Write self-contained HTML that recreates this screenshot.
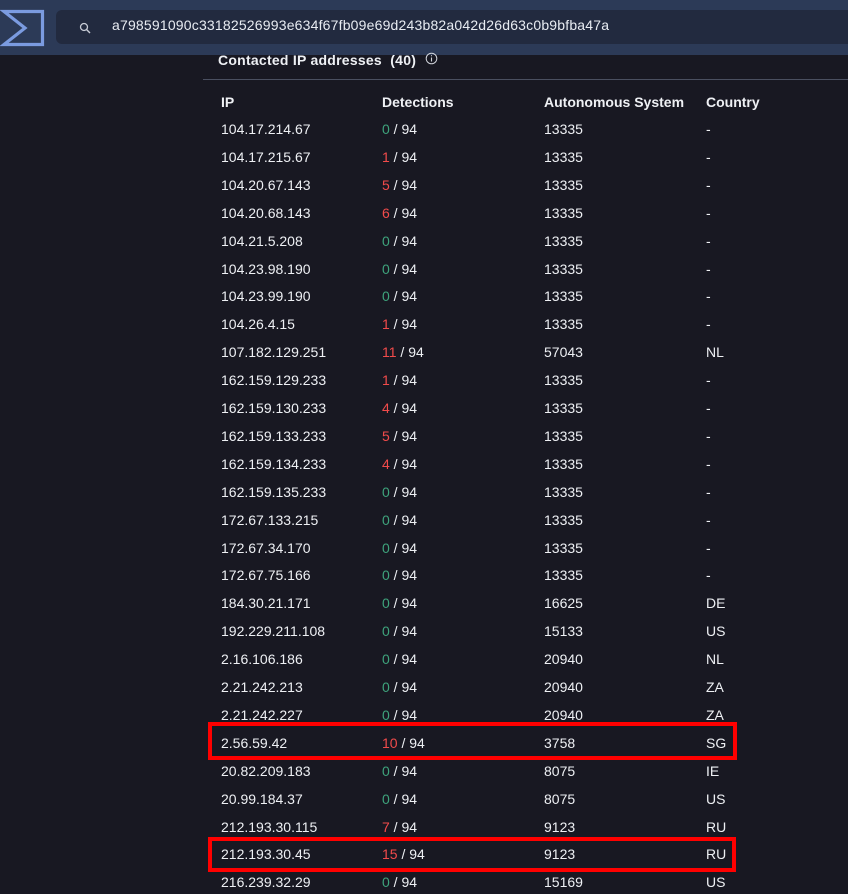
<!DOCTYPE html>
<html><head><meta charset="utf-8"><style>
*{margin:0;padding:0;box-sizing:border-box}
body{width:848px;height:885px;overflow:hidden;background:#181822;font-family:"Liberation Sans","DejaVu Sans",sans-serif;color:#eef0f4;position:relative}
.top{position:absolute;left:0;top:0;width:848px;height:55px;background:#2c3a57}
.search{position:absolute;left:56px;top:10px;width:800px;height:34px;background:#222a3f;border-radius:6px}
.hash{position:absolute;left:112px;top:17px;font-size:14px;color:#e8ecf2;letter-spacing:0.19px}
.title{position:absolute;left:218px;top:52px;font-size:14px;font-weight:bold;letter-spacing:0.25px}
.line{position:absolute;left:203px;top:79px;width:645px;height:1px;background:#4a4f60}
.r{position:absolute;left:0;width:848px;font-size:14px;height:20px}
.r span{position:absolute;top:0}
.h{font-weight:bold}
.g{color:#3ea37c}.red{color:#f24b4b}
.box{position:absolute;border:4px solid #f00}
</style></head><body>
<div class="top"></div>
<div class="search"></div>
<svg style="position:absolute;left:0;top:0" width="50" height="55" viewBox="0 0 50 55"><path d="M4 11.5H42.5V44.5H4L25 28Z" fill="none" stroke="#7b9be0" stroke-width="3.2" stroke-linejoin="miter"/></svg>
<svg style="position:absolute;left:79px;top:22px" width="12" height="12" viewBox="0 0 12 12"><circle cx="5" cy="5" r="3.5" fill="none" stroke="#c8ccd6" stroke-width="1.3"/><path d="M7.5 7.5L11 11" stroke="#c8ccd6" stroke-width="1.4"/></svg>
<div class="hash">a798591090c33182526993e634f67fb09e69d243b82a042d26d63c0b9bfba47a</div>
<div class="title">Contacted IP addresses&nbsp; (40)</div>
<svg style="position:absolute;left:425px;top:52px" width="13" height="13" viewBox="0 0 13 13"><circle cx="6.5" cy="6.5" r="5.3" fill="none" stroke="#d0d3da" stroke-width="1"/><path d="M6.5 5.5V9.5M6.5 3.3V4.3" stroke="#d0d3da" stroke-width="1.1"/></svg>
<div class="line"></div>
<div class="r h" style="top:94px"><span style="left:221px">IP</span><span style="left:382px">Detections</span><span style="left:544px">Autonomous System</span><span style="left:706px">Country</span></div>
<div id="rows"></div>
<div class="box" style="left:208px;top:722px;width:529px;height:38px"></div>
<div class="box" style="left:208px;top:837px;width:528px;height:35px"></div>
<script>
var d=[["104.17.214.67",0,13335,"-"],["104.17.215.67",1,13335,"-"],["104.20.67.143",5,13335,"-"],["104.20.68.143",6,13335,"-"],["104.21.5.208",0,13335,"-"],["104.23.98.190",0,13335,"-"],["104.23.99.190",0,13335,"-"],["104.26.4.15",1,13335,"-"],["107.182.129.251",11,57043,"NL"],["162.159.129.233",1,13335,"-"],["162.159.130.233",4,13335,"-"],["162.159.133.233",5,13335,"-"],["162.159.134.233",4,13335,"-"],["162.159.135.233",0,13335,"-"],["172.67.133.215",0,13335,"-"],["172.67.34.170",0,13335,"-"],["172.67.75.166",0,13335,"-"],["184.30.21.171",0,16625,"DE"],["192.229.211.108",0,15133,"US"],["2.16.106.186",0,20940,"NL"],["2.21.242.213",0,20940,"ZA"],["2.21.242.227",0,20940,"ZA"],["2.56.59.42",10,3758,"SG"],["20.82.209.183",0,8075,"IE"],["20.99.184.37",0,8075,"US"],["212.193.30.115",7,9123,"RU"],["212.193.30.45",15,9123,"RU"],["216.239.32.29",0,15169,"US"]];
var h="";d.forEach(function(r,i){var t=121+i*27.9;h+='<div class="r" style="top:'+t+'px"><span style="left:221px">'+r[0]+'</span><span style="left:382px"><b style="font-weight:normal" class="'+(r[1]?'red':'g')+'">'+r[1]+'</b> / 94</span><span style="left:544px">'+r[2]+'</span><span style="left:706px">'+r[3]+'</span></div>';});
document.getElementById("rows").innerHTML=h;
</script>
</body></html>
